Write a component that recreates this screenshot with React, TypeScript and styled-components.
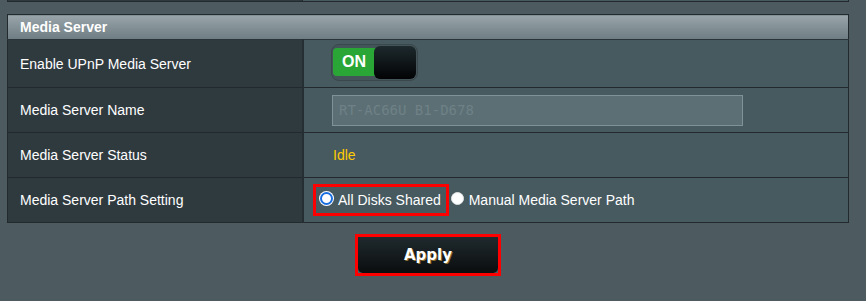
import React, { useState } from 'react'
import styled, { createGlobalStyle } from 'styled-components'

const GlobalStyle = createGlobalStyle`
    html, body {
        margin: 0;
        padding: 0;
        background: #4d5a5f;
        font-family: "Liberation Sans", Arial, sans-serif;
    }
`

const Page = styled.div`
    width: 866px;
    height: 301px;
    overflow: hidden;
    background: #4d5a5f;
`

const PrevTable = styled.div`
    display: grid;
    grid-template-columns: 295px 1fr;
    margin: 0 17px 0 7px;
    height: 2px;
    border: 1px solid #222a2d;
    border-top: none;
    margin-top: -1px;

    div:first-child {
        background: #2f3a3f;
        border-right: 1px solid #222a2d;
    }
    div:last-child {
        background: #475a60;
    }
`

const Table = styled.table`
    margin: 12px 17px 0 7px;
    width: 842px;
    border-collapse: collapse;
    border: 1px solid #222a2d;
    font-size: 14px;
    color: #fff;
`

const Head = styled.th`
    height: 24px;
    padding: 0 12px;
    text-align: left;
    font-size: 14px;
    font-weight: bold;
    color: #fff;
    background: linear-gradient(#98a4a9, #6e7d83);
    border-bottom: 1px solid #2a3337;
`

const Row = styled.tr<{ $h: number }>`
    height: ${({ $h }) => $h}px;
    border-top: 1px solid #222a2d;
`

const Label = styled.th`
    width: 270px;
    padding: 0 12px;
    text-align: left;
    font-weight: normal;
    background: #2f3a3f;
    border-right: 2px solid #252e32;
`

const Value = styled.td`
    padding: 0 0 0 27px;
    background: #475a60;
`

const Toggle = styled.div`
    display: inline-flex;
    align-items: center;
    width: 87px;
    height: 37px;
    box-sizing: border-box;
    padding: 0 1px;
    border: 1px solid #3a474b;
    border-radius: 8px;
    background: #44555a;
    vertical-align: middle;
    margin-top: -3px;
`

const ToggleOn = styled.span`
    flex: 0 0 46px;
    display: flex;
    align-items: center;
    height: 28px;
    padding-left: 9px;
    box-sizing: border-box;
    background: #2aa636;
    border-radius: 4px 0 0 4px;
    font-size: 16px;
    font-weight: bold;
    color: #fff;
`

const Knob = styled.span`
    flex: 0 0 42px;
    height: 33px;
    margin-left: -5px;
    border-radius: 6px;
    background: linear-gradient(#1d292d, #020304);
`

const NameInput = styled.input`
    width: 411px;
    height: 31px;
    box-sizing: border-box;
    margin-left: 1px;
    padding: 0 6px;
    border: 1px solid #7e9297;
    background: #5b6f75;
    font-family: "DejaVu Sans Mono", "Liberation Mono", monospace;
    font-size: 14px;
    color: #6f8186;
    outline: none;
    vertical-align: middle;
`

const Status = styled.span`
    margin-left: 2px;
    color: #ffcc00;
    font-size: 14px;
`

const RadioGroup = styled.div`
    display: flex;
    align-items: center;
    margin-left: -18px;
`

const RadioLabel = styled.label<{ $marked?: boolean }>`
    display: inline-flex;
    align-items: center;
    gap: 5px;
    height: 26px;
    padding: ${({ $marked }) => ($marked ? '0 5px 0 4px' : '0 0 0 2px')};
    border: ${({ $marked }) => ($marked ? '3px solid #ff0000' : 'none')};
    font-size: 14px;
    color: #fff;
`

const Radio = styled.span<{ $checked?: boolean }>`
    width: 13px;
    height: 13px;
    box-sizing: border-box;
    border-radius: 50%;
    background: #fff;
    border: ${({ $checked }) => ($checked ? '2px solid #1a6fe0' : '1px solid #e4e4e4')};
    box-shadow: ${({ $checked }) => ($checked ? '0 0 0 1px #fff' : 'none')};
    margin-top: -3px;
`

const Footer = styled.div`
    display: flex;
    justify-content: center;
    padding-top: 11px;
    padding-right: 10px;
`

const ApplyButton = styled.button`
    width: 146px;
    height: 42px;
    border: 3px solid #ff0000;
    background: #4d5a5f;
    padding: 0;
    cursor: pointer;

    span {
        display: flex;
        align-items: center;
        justify-content: center;
        height: 100%;
        border-radius: 0 0 5px 5px;
        background: linear-gradient(#1f2a2e, #0b0d0e);
        font-family: "DejaVu Sans", Verdana, sans-serif;
        font-size: 15px;
        font-weight: bold;
        color: #fff;
        text-shadow: 1px 1px 0 #8a6c32;
    }
`

const App = () => {
    const [shared, setShared] = useState(true)

    return (
        <Page>
            <GlobalStyle />
            <PrevTable>
                <div />
                <div />
            </PrevTable>
            <Table>
                <thead>
                    <tr>
                        <Head colSpan={2}>Media Server</Head>
                    </tr>
                </thead>
                <tbody>
                    <Row $h={48}>
                        <Label>Enable UPnP Media Server</Label>
                        <Value>
                            <Toggle>
                                <ToggleOn>ON</ToggleOn>
                                <Knob />
                            </Toggle>
                        </Value>
                    </Row>
                    <Row $h={45}>
                        <Label>Media Server Name</Label>
                        <Value>
                            <NameInput readOnly value="RT-AC66U_B1-D678" />
                        </Value>
                    </Row>
                    <Row $h={45}>
                        <Label>Media Server Status</Label>
                        <Value>
                            <Status>Idle</Status>
                        </Value>
                    </Row>
                    <Row $h={45}>
                        <Label>Media Server Path Setting</Label>
                        <Value>
                            <RadioGroup>
                                <RadioLabel $marked onClick={() => setShared(true)}>
                                    <Radio $checked={shared} />
                                    All Disks Shared
                                </RadioLabel>
                                <RadioLabel onClick={() => setShared(false)}>
                                    <Radio $checked={!shared} />
                                    Manual Media Server Path
                                </RadioLabel>
                            </RadioGroup>
                        </Value>
                    </Row>
                </tbody>
            </Table>
            <Footer>
                <ApplyButton>
                    <span>Apply</span>
                </ApplyButton>
            </Footer>
        </Page>
    )
}

export default App
